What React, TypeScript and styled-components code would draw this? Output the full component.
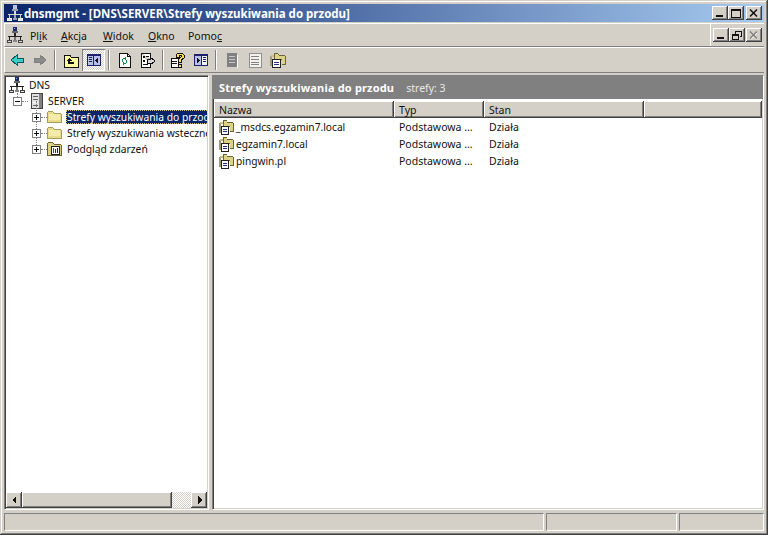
import * as React from 'react'
import styled, { createGlobalStyle } from 'styled-components'

const FACE = '#d4d0c8'
const FONT = `"Noto Sans", "Liberation Sans", sans-serif`

const GlobalStyle = createGlobalStyle`
  html, body {
    margin: 0;
    padding: 0;
    background: ${FACE};
    overflow: hidden;
  }
`

const Window = styled.div`
  box-sizing: border-box;
  width: 768px;
  height: 535px;
  padding: 4px;
  display: flex;
  flex-direction: column;
  background: ${FACE};
  font: 10.5px ${FONT};
  color: #111;
  box-shadow: inset -1px -1px #404040, inset 1px 1px ${FACE}, inset -2px -2px #808080, inset 2px 2px #fff;
`

const TitleBar = styled.div`
  flex: none;
  height: 18px;
  display: flex;
  align-items: center;
  padding: 0 2px 0 3px;
  background: linear-gradient(90deg, #0a246a, #a6caf0);
`

const TitleText = styled.span`
  flex: 1;
  margin-left: 1px;
  color: #fff;
  font-weight: 700;
  font-size: 11.5px;
  white-space: nowrap;
`

const CaptionButton = styled.button<{ $gap?: number }>`
  box-sizing: border-box;
  width: 16px;
  height: 14px;
  margin: 0 0 0 ${(p) => p.$gap ?? 0}px;
  padding: 0;
  border: 0;
  display: flex;
  align-items: center;
  justify-content: center;
  background: ${FACE};
  box-shadow: inset -1px -1px #404040, inset 1px 1px #fff, inset -2px -2px #808080;
`

const MenuBar = styled.div`
  flex: none;
  height: 24px;
  box-sizing: border-box;
  margin-top: 1px;
  padding: 0 2px 0 2px;
  display: flex;
  align-items: center;
  border-top: 1px solid #fff;
  border-left: 1px solid #fff;
  border-bottom: 1px solid #808080;
`

const MenuItems = styled.div`
  flex: 1;
  display: flex;
  gap: 15px;
  margin-left: 7px;
  padding-top: 1px;
`

const MenuItem = styled.span<{ $w: number }>`
  width: ${(p) => p.$w}px;
  white-space: nowrap;
`

const MdiDivider = styled.div`
  align-self: stretch;
  width: 1px;
  margin-right: 2px;
  background: #fff;
`

const Toolbar = styled.div`
  flex: none;
  height: 26px;
  box-sizing: border-box;
  display: flex;
  align-items: center;
  border-top: 1px solid #fff;
  border-left: 1px solid #fff;
  border-bottom: 1px solid #808080;
`

const ToolButton = styled.div<{ $pressed?: boolean }>`
  box-sizing: border-box;
  width: 23px;
  height: 22px;
  display: flex;
  align-items: center;
  justify-content: center;
  ${(p) =>
    p.$pressed
      ? `background: repeating-conic-gradient(#fff 0 25%, ${FACE} 0 50%) 0 0 / 2px 2px;
         box-shadow: inset 1px 1px #808080, inset -1px -1px #fff;`
      : ''}
`

const ToolSeparator = styled.div<{ $tight?: boolean }>`
  width: 2px;
  height: 20px;
  margin: 0 ${(p) => (p.$tight ? 2 : 3)}px 0 3px;
  background: linear-gradient(90deg, #808080 50%, #fff 50%);
`

const Panes = styled.div`
  flex: 1;
  min-height: 0;
  margin-top: 2px;
  display: flex;
  gap: 3px;
`

const Sunken = styled.div`
  box-sizing: border-box;
  display: flex;
  flex-direction: column;
  border: 1px solid;
  border-color: #808080 #fff #fff #808080;
  box-shadow: inset 1px 1px #404040, inset -1px -1px ${FACE};
  padding: 1px;
  background: #fff;
`

const TreePane = styled(Sunken)`
  flex: none;
  width: 205px;
`

const Tree = styled.div`
  flex: 1;
  min-height: 0;
  overflow: hidden;
  font-size: 10.3px;
`

const TreeRow = styled.div<{ $indent: number }>`
  height: 16px;
  display: flex;
  align-items: center;
  padding-left: ${(p) => p.$indent}px;
  white-space: nowrap;
`

const Toggle = styled.span<{ $stem: number }>`
  position: relative;
  flex: none;
  box-sizing: border-box;
  width: 9px;
  height: 9px;
  border: 1px solid #808080;
  background: #fff;
  &::before {
    content: '';
    position: absolute;
    left: 3px;
    bottom: 8px;
    height: ${(p) => p.$stem}px;
    border-left: 1px dotted #808080;
  }
  &::after {
    content: '';
    position: absolute;
    left: 8px;
    top: 3px;
    width: 6px;
    border-top: 1px dotted #808080;
  }
`

const ToggleMark = styled.svg`
  display: block;
  width: 7px;
  height: 7px;
`

const NodeIcon = styled.span<{ $left: number }>`
  flex: none;
  display: flex;
  margin-left: ${(p) => p.$left}px;
`

const NodeLabel = styled.span<{ $left: number; $selected?: boolean }>`
  flex: ${(p) => (p.$selected ? 1 : 'none')};
  margin-left: ${(p) => p.$left}px;
  padding: 0 1px;
  line-height: 14px;
  ${(p) => (p.$selected ? 'background: #0a246a; color: #fff; outline: 1px dotted #d8c070; outline-offset: -1px;' : '')}
`

const ScrollBar = styled.div`
  flex: none;
  height: 16px;
  display: flex;
  background: repeating-conic-gradient(#fff 0 25%, ${FACE} 0 50%) 0 0 / 2px 2px;
`

const ScrollButton = styled.div`
  flex: none;
  box-sizing: border-box;
  width: 16px;
  display: flex;
  align-items: center;
  justify-content: center;
  background: ${FACE};
  box-shadow: inset -1px -1px #404040, inset 1px 1px #fff, inset -2px -2px #808080;
`

const ScrollThumb = styled(ScrollButton)`
  width: 150px;
`

const ScrollTrack = styled.div`
  flex: 1;
`

const ListPane = styled(Sunken)`
  flex: 1;
  min-width: 0;
`

const ListBanner = styled.div`
  flex: none;
  height: 23px;
  display: flex;
  align-items: center;
  gap: 12px;
  padding-left: 6px;
  margin: -1px -1px 0;
  background: #808080;
  color: #fff;
  white-space: nowrap;
`

const BannerTitle = styled.span`
  font-weight: 700;
  font-size: 11px;
  letter-spacing: 0.17px;
`

const BannerNote = styled.span`
  color: #e8e8e8;
`

const ListHeader = styled.div`
  flex: none;
  height: 17px;
  margin-top: 2px;
  display: flex;
  background: ${FACE};
`

const ColumnHead = styled.div<{ $w?: number }>`
  box-sizing: border-box;
  ${(p) => (p.$w ? `width: ${p.$w}px; flex: none;` : 'flex: 1;')}
  padding: 2px 0 0 5px;
  line-height: 15px;
  box-shadow: inset -1px -1px #404040, inset 1px 1px #fff, inset -2px -2px #808080;
`

const ListBody = styled.div`
  flex: 1;
`

const ListRow = styled.div`
  height: 17px;
  display: flex;
  align-items: center;
  white-space: nowrap;
`

const NameCell = styled.div`
  width: 180px;
  flex: none;
  display: flex;
  align-items: center;
  gap: 2px;
  padding-left: 5px;
  box-sizing: border-box;
  font-size: 10.2px;
`

const PlainCell = styled.div<{ $w: number }>`
  width: ${(p) => p.$w}px;
  flex: none;
  padding-left: 5px;
  box-sizing: border-box;
`

const StatusBar = styled.div`
  flex: none;
  height: 18px;
  margin-top: 3px;
  display: flex;
  gap: 2px;
`

const StatusPanel = styled.div<{ $w?: number }>`
  box-sizing: border-box;
  ${(p) => (p.$w ? `width: ${p.$w}px; flex: none;` : 'flex: 1;')}
  border: 1px solid;
  border-color: #808080 #fff #fff #808080;
`

const Crisp = styled.svg`
  display: block;
  shape-rendering: crispEdges;
`

const Glyph: React.FC<{ w?: number; h?: number; shownW?: number; shownH?: number; children: React.ReactNode }> = ({
  w = 16,
  h = 16,
  shownW,
  shownH,
  children,
}) => (
  <Crisp width={shownW ?? w} height={shownH ?? h} viewBox={`0 0 ${w} ${h}`} preserveAspectRatio="none">
    {children}
  </Crisp>
)

const NetworkIcon: React.FC<{ light?: boolean }> = ({ light }) => {
  const line = light ? '#d8d8d8' : '#222'
  const box = light ? '#f0f0f0' : '#444'
  return (
    <Glyph>
      <rect x="6" y="0" width="4" height="4" fill={light ? '#c0c8e0' : '#1a2a6c'} />
      <rect x="7" y="1" width="1" height="1" fill="#8fb0e8" />
      <rect x="5" y="4" width="6" height="2" fill={light ? '#9aa0b0' : '#666'} />
      <rect x="7" y="6" width="2" height="4" fill={line} />
      <rect x="1" y="9" width="14" height="1" fill={line} />
      <rect x="2" y="10" width="1" height="3" fill={line} />
      <rect x="13" y="10" width="1" height="3" fill={line} />
      <rect x="7" y="10" width="2" height="3" fill={light ? '#9aa0b0' : '#777'} />
      <rect x="0" y="13" width="5" height="3" fill={box} />
      <rect x="1" y="14" width="3" height="1" fill="#ddd" />
      <rect x="11" y="13" width="5" height="3" fill={box} />
      <rect x="12" y="14" width="3" height="1" fill="#ddd" />
      <rect x="6" y="13" width="4" height="2" fill={light ? '#9aa0b0' : '#888'} />
    </Glyph>
  )
}

const ServerIcon = () => (
  <Glyph w={14} h={16}>
    <rect x="1" y="0" width="12" height="16" fill="#444" />
    <rect x="2" y="1" width="7" height="14" fill="#e0e0e0" />
    <rect x="9" y="1" width="3" height="14" fill="#808080" />
    <rect x="3" y="3" width="5" height="1" fill="#666" />
    <rect x="3" y="6" width="5" height="1" fill="#666" />
    <rect x="3" y="9" width="5" height="1" fill="#fff" />
    <rect x="3" y="12" width="5" height="1" fill="#666" />
  </Glyph>
)

const FolderIcon = () => (
  <Glyph>
    <path d="M1 4V3h1V2h5v1h1v1h7v1h1v9H1V4z" fill="#a89c5c" />
    <path d="M2 4V3h5v1h1v1h7v8H2z" fill="#e6dc8c" />
    <rect x="3" y="5" width="11" height="6" fill="#f2eca8" />
  </Glyph>
)

const LogFolderIcon = () => (
  <Glyph>
    <path d="M1 3V2h1V1h5v1h1v1h7v1h1v11H1z" fill="#6c6438" />
    <path d="M2 3V2h5v1h1v1h7v10H2z" fill="#dcd284" />
    <rect x="5" y="5" width="9" height="9" fill="#222" />
    <rect x="6" y="6" width="7" height="7" fill="#fff" />
    <rect x="7" y="7" width="1" height="5" fill="#a02060" />
    <rect x="9" y="8" width="1" height="4" fill="#203080" />
    <rect x="11" y="7" width="1" height="5" fill="#222" />
  </Glyph>
)

const ZoneIcon: React.FC<{ shownW?: number }> = ({ shownW }) => (
  <Glyph shownW={shownW}>
    <path d="M4 2V1h4v1h1v1h6v1h1v9h-4V8H4z" fill="#6c6438" />
    <path d="M5 2h3v1h1v1h6v8h-3V7H5z" fill="#dcd284" />
    <rect x="0" y="4" width="2" height="10" fill="#a09870" />
    <rect x="1" y="3" width="3" height="2" fill="#c8c088" />
    <rect x="2" y="7" width="9" height="9" fill="#222" />
    <rect x="3" y="8" width="7" height="7" fill="#fff" />
    <rect x="4" y="10" width="5" height="1" fill="#203080" />
    <rect x="4" y="12" width="5" height="1" fill="#203080" />
  </Glyph>
)

const ArrowLeftIcon = () => (
  <Glyph>
    <path d="M2 8l6-5v3h6v4H8v3z" fill="#36d0c8" stroke="#0c5a60" strokeWidth="1" />
  </Glyph>
)

const ArrowRightIcon = () => (
  <Glyph>
    <path d="M14 8L8 3v3H2v4h6v3z" fill="#8c8c8c" stroke="#808080" strokeWidth="1" />
  </Glyph>
)

const UpFolderIcon = () => (
  <Glyph>
    <path d="M1 3h6l1 2h7v10H1z" fill="#ffffa0" stroke="#111" />
    <path d="M6 6L3 9h2v3h6v-2H7V9h2z" fill="#111" />
  </Glyph>
)

const PanelLeftIcon = () => (
  <Glyph>
    <rect x="1" y="2" width="14" height="12" fill="#20206c" />
    <rect x="2" y="4" width="5" height="9" fill="#b8c0e8" />
    <rect x="8" y="4" width="6" height="9" fill="#b8c0e8" />
    <rect x="3" y="5" width="3" height="1" fill="#20206c" />
    <rect x="3" y="7" width="3" height="1" fill="#20206c" />
    <rect x="3" y="9" width="3" height="1" fill="#20206c" />
    <path d="M12 5v7L9 8.500z" fill="#111" />
  </Glyph>
)

const PanelRightIcon = () => (
  <Glyph>
    <rect x="1" y="2" width="14" height="12" fill="#20206c" />
    <rect x="2" y="4" width="6" height="9" fill="#b8c0e8" />
    <rect x="9" y="4" width="5" height="9" fill="#f0f0f8" />
    <rect x="10" y="5" width="3" height="1" fill="#20206c" />
    <rect x="10" y="7" width="3" height="1" fill="#20206c" />
    <rect x="10" y="9" width="3" height="1" fill="#20206c" />
    <path d="M4 5v7L7 8.500z" fill="#111" />
  </Glyph>
)

const RefreshIcon = () => (
  <Glyph>
    <path d="M2 1h8l3 3v11H2z" fill="#fff" stroke="#111" />
    <path d="M10 1v3h3" fill="none" stroke="#111" />
    <rect x="6" y="6" width="3" height="1" fill="#109040" />
    <rect x="5" y="7" width="1" height="3" fill="#109040" />
    <rect x="9" y="8" width="1" height="3" fill="#109040" />
    <rect x="6" y="11" width="3" height="1" fill="#109040" />
    <rect x="8" y="5" width="1" height="3" fill="#109040" />
    <rect x="6" y="10" width="1" height="3" fill="#109040" />
  </Glyph>
)

const ExportIcon = () => (
  <Glyph>
    <path d="M1 1h9v5M10 12v3H1V1" fill="#fff" stroke="#111" />
    <rect x="3" y="4" width="2" height="2" fill="#111" />
    <rect x="6" y="4" width="3" height="1" fill="#111" />
    <rect x="3" y="8" width="2" height="2" fill="#111" />
    <rect x="3" y="12" width="5" height="1" fill="#111" />
    <path d="M7 7h3V5l5 4-5 4v-2H7z" fill="#d8d8d8" stroke="#111" />
  </Glyph>
)

const HelpIcon = () => (
  <Glyph>
    <path d="M1 6h7v9H1z" fill="#fff" stroke="#111" />
    <rect x="2" y="9" width="5" height="1" fill="#111" />
    <rect x="2" y="11" width="5" height="1" fill="#111" />
    <path d="M6 3l2-2h4l2 2v3l-3 2v2H8V7l3-2V3H9v2H6z" fill="#ffe050" stroke="#111" />
    <rect x="8" y="12" width="3" height="3" fill="#ffe050" stroke="#111" />
  </Glyph>
)

const GreyDocIcon = () => (
  <Glyph>
    <path d="M3 1h9l1 1v13H3z" fill="#808080" />
    <rect x="5" y="4" width="6" height="1" fill="#c8c8c8" />
    <rect x="5" y="7" width="6" height="1" fill="#c8c8c8" />
    <rect x="5" y="10" width="6" height="1" fill="#c8c8c8" />
    <rect x="13" y="3" width="1" height="13" fill="#fff" />
  </Glyph>
)

const NotesIcon = () => (
  <Glyph>
    <rect x="2" y="1" width="12" height="14" fill="#f4f2ec" stroke="#909090" />
    <rect x="4" y="4" width="8" height="1" fill="#808080" />
    <rect x="4" y="7" width="8" height="1" fill="#808080" />
    <rect x="4" y="10" width="8" height="1" fill="#808080" />
    <rect x="4" y="12" width="8" height="1" fill="#808080" />
  </Glyph>
)

const CloseMark: React.FC<{ color?: string; shadow?: boolean }> = ({ color = '#111', shadow }) => (
  <svg width="10" height="9" viewBox="0 0 10 9" style={{ display: 'block' }}>
    {shadow && <path d="M2 1.500l6 6M8 1.500l-6 6" stroke="#fff" strokeWidth="1.500" />}
    <path d="M1 0.500l7 7M8 0.500l-7 7" stroke={color} strokeWidth="1.500" />
  </svg>
)

const MinMark = () => (
  <Glyph w={10} h={9}>
    <rect x="1" y="6" width="7" height="2" fill="#111" />
  </Glyph>
)

const MaxMark = () => (
  <Glyph w={10} h={9}>
    <rect x="0.500" y="0.500" width="9" height="8" fill="none" stroke="#111" />
    <rect x="0" y="0" width="10" height="2" fill="#111" />
  </Glyph>
)

const RestoreMark = () => (
  <Glyph w={10} h={9}>
    <path d="M3.500 2.500v-2h6v5h-2" fill="none" stroke="#111" />
    <rect x="0.500" y="3.500" width="6" height="5" fill="none" stroke="#111" />
    <rect x="0" y="3" width="7" height="2" fill="#111" />
    <rect x="3" y="0" width="7" height="1" fill="#111" />
  </Glyph>
)

const PlusMinus: React.FC<{ open?: boolean }> = ({ open }) => (
  <ToggleMark viewBox="0 0 7 7" shapeRendering="crispEdges">
    <rect x="1" y="3" width="5" height="1" fill="#111" />
    {!open && <rect x="3" y="1" width="1" height="5" fill="#111" />}
  </ToggleMark>
)

const ScrollArrow: React.FC<{ right?: boolean }> = ({ right }) => (
  <Glyph w={5} h={8}>
    <path d={right ? 'M1 0l4 4-4 4z' : 'M4 0L0 4l4 4z'} fill="#111" />
  </Glyph>
)

const zones = ['_msdcs.egzamin7.local', 'egzamin7.local', 'pingwin.pl']

const App: React.FC = () => {
  return (
    <Window>
      <GlobalStyle />
      <TitleBar>
        <NetworkIcon light />
        <TitleText>dnsmgmt - [DNS\SERVER\Strefy wyszukiwania do przodu]</TitleText>
        <CaptionButton><MinMark /></CaptionButton>
        <CaptionButton><MaxMark /></CaptionButton>
        <CaptionButton $gap={2}><CloseMark /></CaptionButton>
      </TitleBar>

      <MenuBar>
        <NetworkIcon />
        <MenuItems>
          <MenuItem $w={16}>Pl<u>i</u>k</MenuItem>
          <MenuItem $w={27}><u>A</u>kcja</MenuItem>
          <MenuItem $w={30}><u>W</u>idok</MenuItem>
          <MenuItem $w={25}><u>O</u>kno</MenuItem>
          <MenuItem $w={32}>Pomo<u>c</u></MenuItem>
        </MenuItems>
        <MdiDivider />
        <CaptionButton><MinMark /></CaptionButton>
        <CaptionButton><RestoreMark /></CaptionButton>
        <CaptionButton $gap={1}><CloseMark color="#808080" shadow /></CaptionButton>
      </MenuBar>

      <Toolbar>
        <ToolButton><ArrowLeftIcon /></ToolButton>
        <ToolButton><ArrowRightIcon /></ToolButton>
        <ToolSeparator />
        <ToolButton><UpFolderIcon /></ToolButton>
        <ToolButton $pressed><PanelLeftIcon /></ToolButton>
        <ToolSeparator />
        <ToolButton><RefreshIcon /></ToolButton>
        <ToolButton><ExportIcon /></ToolButton>
        <ToolSeparator $tight />
        <ToolButton><HelpIcon /></ToolButton>
        <ToolButton><PanelRightIcon /></ToolButton>
        <ToolSeparator />
        <ToolButton><GreyDocIcon /></ToolButton>
        <ToolButton><NotesIcon /></ToolButton>
        <ToolButton><ZoneIcon /></ToolButton>
      </Toolbar>

      <Panes>
        <TreePane>
          <Tree>
            <TreeRow $indent={3}>
              <NetworkIcon />
              <NodeLabel $left={3}>DNS</NodeLabel>
            </TreeRow>
            <TreeRow $indent={7}>
              <Toggle $stem={4}><PlusMinus open /></Toggle>
              <NodeIcon $left={8}><ServerIcon /></NodeIcon>
              <NodeLabel $left={3}>SERVER</NodeLabel>
            </TreeRow>
            <TreeRow $indent={26}>
              <Toggle $stem={12}><PlusMinus /></Toggle>
              <NodeIcon $left={5}><FolderIcon /></NodeIcon>
              <NodeLabel $left={4} $selected>Strefy wyszukiwania do przodu</NodeLabel>
            </TreeRow>
            <TreeRow $indent={26}>
              <Toggle $stem={8}><PlusMinus /></Toggle>
              <NodeIcon $left={5}><FolderIcon /></NodeIcon>
              <NodeLabel $left={4}>Strefy wyszukiwania wstecznego</NodeLabel>
            </TreeRow>
            <TreeRow $indent={26}>
              <Toggle $stem={8}><PlusMinus /></Toggle>
              <NodeIcon $left={5}><LogFolderIcon /></NodeIcon>
              <NodeLabel $left={4}>Podgląd zdarzeń</NodeLabel>
            </TreeRow>
          </Tree>
          <ScrollBar>
            <ScrollButton><ScrollArrow /></ScrollButton>
            <ScrollThumb />
            <ScrollTrack />
            <ScrollButton><ScrollArrow right /></ScrollButton>
          </ScrollBar>
        </TreePane>

        <ListPane>
          <ListBanner>
            <BannerTitle>Strefy wyszukiwania do przodu</BannerTitle>
            <BannerNote>strefy: 3</BannerNote>
          </ListBanner>
          <ListHeader>
            <ColumnHead $w={180}>Nazwa</ColumnHead>
            <ColumnHead $w={90}>Typ</ColumnHead>
            <ColumnHead $w={160}>Stan</ColumnHead>
            <ColumnHead />
          </ListHeader>
          <ListBody>
            {zones.map((name) => (
              <ListRow key={name}>
                <NameCell>
                  <ZoneIcon shownW={15} />
                  {name}
                </NameCell>
                <PlainCell $w={90}>Podstawowa ...</PlainCell>
                <PlainCell $w={160}>Działa</PlainCell>
              </ListRow>
            ))}
          </ListBody>
        </ListPane>
      </Panes>

      <StatusBar>
        <StatusPanel $w={540} />
        <StatusPanel $w={131} />
        <StatusPanel />
      </StatusBar>
    </Window>
  )
}

export default App
